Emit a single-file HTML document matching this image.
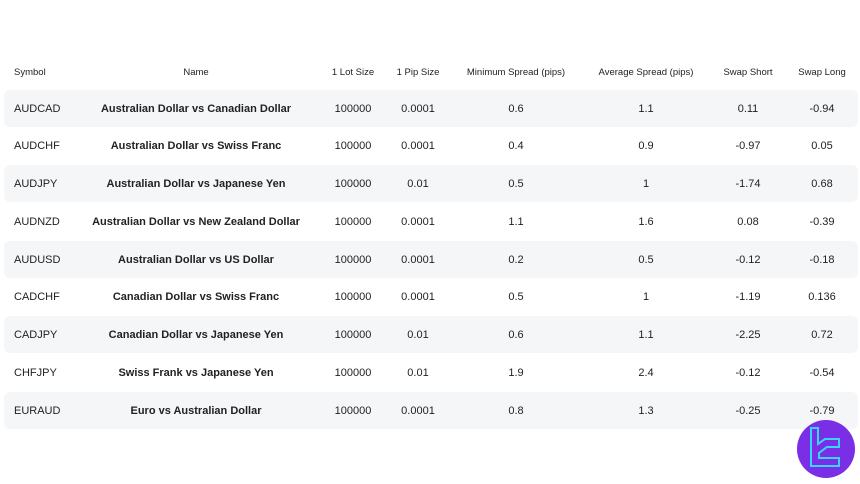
<!DOCTYPE html>
<html><head><style>
body{margin:0;width:860px;height:484px;background:#fff;font-family:"Liberation Sans",sans-serif;color:#1f1f1f;position:relative;overflow:hidden}
.h{position:absolute;top:67px;font-size:9.5px;color:#222;white-space:nowrap}
.r{position:absolute;left:4px;width:854px;height:37px;border-radius:6px}
.r.s{background:#f5f6f7}
.c{position:absolute;font-size:11px;transform:translateX(-50%);white-space:nowrap}
.n{font-weight:bold;font-size:11px;color:#222}
</style></head><body>
<div class="h" style="left:14px">Symbol</div>
<div class="h" style="left:196px;transform:translateX(-50%)">Name</div>
<div class="h" style="left:353px;transform:translateX(-50%)">1 Lot Size</div>
<div class="h" style="left:418px;transform:translateX(-50%)">1 Pip Size</div>
<div class="h" style="left:516px;transform:translateX(-50%)">Minimum Spread (pips)</div>
<div class="h" style="left:646px;transform:translateX(-50%)">Average Spread (pips)</div>
<div class="h" style="left:748px;transform:translateX(-50%)">Swap Short</div>
<div class="h" style="left:822px;transform:translateX(-50%)">Swap Long</div>
<div id="rows"></div>
<script>
var d=[["AUDCAD","Australian Dollar vs Canadian Dollar","0.0001","0.6","1.1","0.11","-0.94"],
["AUDCHF","Australian Dollar vs Swiss Franc","0.0001","0.4","0.9","-0.97","0.05"],
["AUDJPY","Australian Dollar vs Japanese Yen","0.01","0.5","1","-1.74","0.68"],
["AUDNZD","Australian Dollar vs New Zealand Dollar","0.0001","1.1","1.6","0.08","-0.39"],
["AUDUSD","Australian Dollar vs US Dollar","0.0001","0.2","0.5","-0.12","-0.18"],
["CADCHF","Canadian Dollar vs Swiss Franc","0.0001","0.5","1","-1.19","0.136"],
["CADJPY","Canadian Dollar vs Japanese Yen","0.01","0.6","1.1","-2.25","0.72"],
["CHFJPY","Swiss Frank vs Japanese Yen","0.01","1.9","2.4","-0.12","-0.54"],
["EURAUD","Euro vs Australian Dollar","0.0001","0.8","1.3","-0.25","-0.79"]];
var h="";d.forEach(function(r,i){var cy=108+i*37.75;var t=cy-18.5;
h+='<div class="r'+(i%2==0?' s':'')+'" style="top:'+t+'px"></div>';
var y=cy-5.5;
h+='<div class="c" style="left:14px;transform:none;top:'+y+'px">'+r[0]+'</div>';
h+='<div class="c n" style="left:196px;top:'+y+'px">'+r[1]+'</div>';
h+='<div class="c" style="left:353px;top:'+y+'px">100000</div>';
var xs=[418,516,646,748,822];for(var k=0;k<5;k++)h+='<div class="c" style="left:'+xs[k]+'px;top:'+y+'px">'+r[k+2]+'</div>';});
document.getElementById("rows").innerHTML=h;
</script>
<svg style="position:absolute;left:795px;top:418px" width="62" height="62" viewBox="0 0 62 62">
<circle cx="31" cy="31" r="29" fill="#7a2ee6"/>
<path d="M16 10H23V26L30 21H44V29H32L24 35V40H44V48H16Z" fill="none" stroke="#35d6ff" stroke-width="2" stroke-linejoin="miter"/>
</svg>
</body></html>
